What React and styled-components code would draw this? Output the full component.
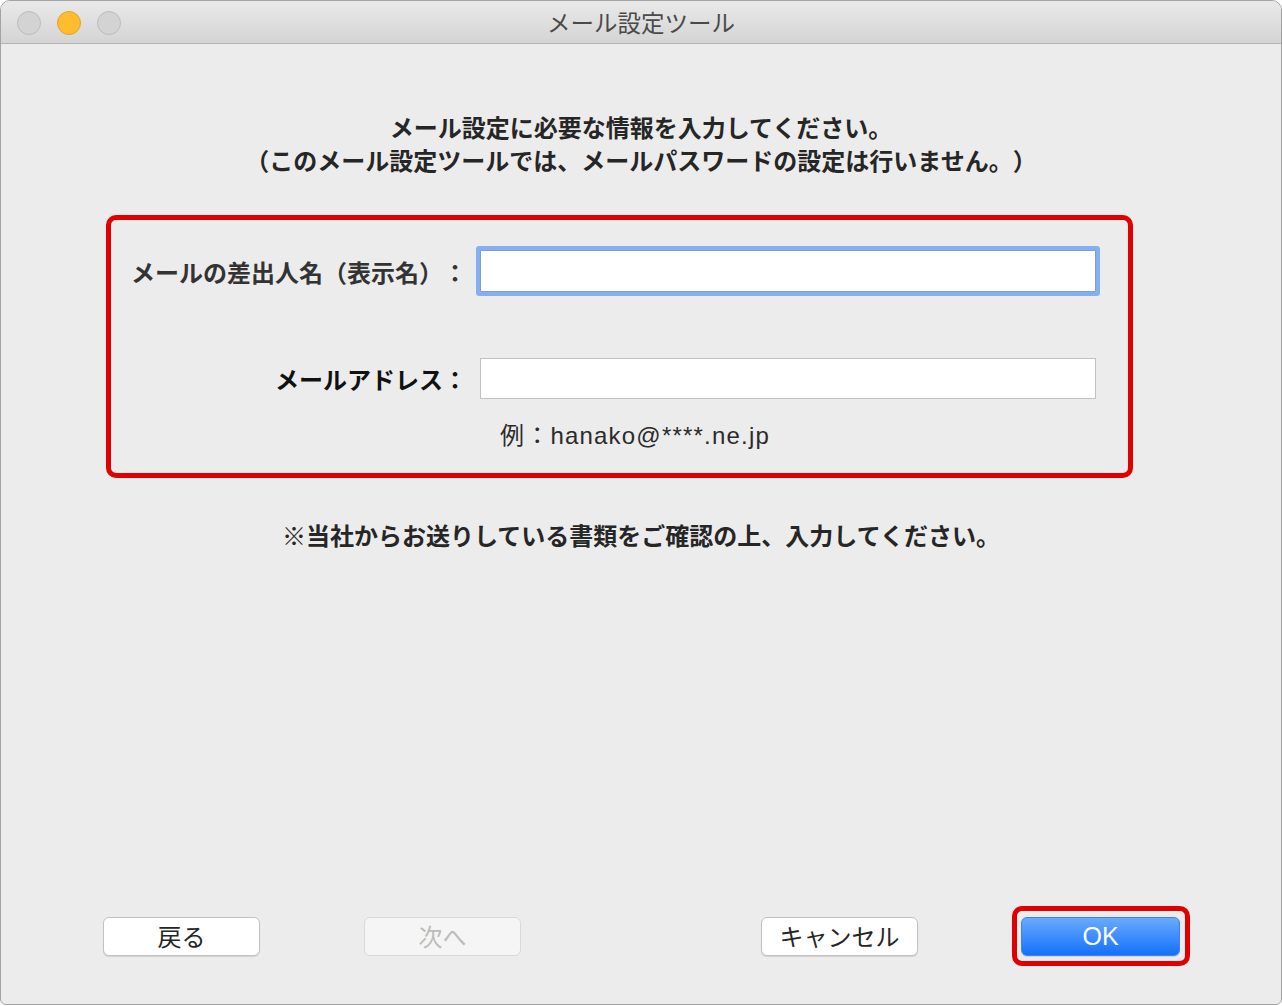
import React, { useState } from 'react';
import styled, { createGlobalStyle } from 'styled-components';

const GlobalStyle = createGlobalStyle`
  html, body {
    margin: 0;
    padding: 0;
    background: #ffffff;
  }
  body {
    font-family: "Liberation Sans", "Noto Sans CJK JP", sans-serif;
    text-spacing-trim: space-all;
  }
  * { box-sizing: border-box; }
`;

const Window = styled.div`
  width: 1282px;
  height: 1005px;
  display: flex;
  flex-direction: column;
  border: 1px solid #a3a3a3;
  border-radius: 10px 10px 6px 6px;
  background: #ececec;
  overflow: hidden;
`;

const TitleBar = styled.div`
  position: relative;
  height: 43px;
  flex: none;
  display: flex;
  align-items: center;
  justify-content: center;
  background: linear-gradient(#e9e9e9, #d4d4d4);
  border-bottom: 1px solid #b3b3b3;
`;

const Lights = styled.div`
  position: absolute;
  left: 16px;
  top: 10px;
  display: flex;
  gap: 16px;
`;

const Light = styled.span`
  width: 24px;
  height: 24px;
  border-radius: 50%;
  background: ${p => (p.$on ? '#febc2e' : '#d3d3d3')};
  border: 1px solid ${p => (p.$on ? '#e1a325' : '#bcbcbc')};
`;

const Title = styled.div`
  font-family: "Noto Sans CJK JP", sans-serif;
  font-size: 23.5px;
  color: #4a4a4a;
`;

const Body = styled.div`
  flex: 1;
  display: flex;
  flex-direction: column;
  padding: 66px 0 38px;
`;

const Lead = styled.p`
  margin: 0;
  text-align: center;
  font-family: "Noto Sans CJK JP", sans-serif;
  font-weight: 700;
  font-size: 24px;
  line-height: 33px;
  color: #262626;
`;

const FormBox = styled.div`
  margin: 39px 0 0 105px;
  width: 1027px;
  border: 5px solid #e00000;
  border-radius: 10px;
  padding: 30px 0 24px 0;
`;

const Field = styled.div`
  display: flex;
  align-items: center;
  gap: 13px;
  margin-bottom: ${p => p.$gap || 0}px;
`;

const Label = styled.label`
  width: 356px;
  flex: none;
  text-align: right;
  font-family: "Noto Sans CJK JP", sans-serif;
  font-weight: 700;
  font-size: 24px;
  color: ${p => p.$color || '#333'};
  white-space: nowrap;
`;

const Input = styled.input`
  width: 616px;
  height: ${p => (p.$focus ? '42px' : '41px')};
  border: 1px solid ${p => (p.$focus ? '#7c9ed8' : '#c0c0c0')};
  background: #fff;
  outline: none;
  box-shadow: ${p => (p.$focus ? '0 0 0 4px #86aef2' : 'none')};
  border-radius: ${p => (p.$focus ? '1px' : '0')};
  font-size: 20px;
  padding: 0 8px;
`;

const Hint = styled.div`
  margin: 24px 0 0 389px;
  font-size: 24px;
  line-height: 26px;
  letter-spacing: 1.2px;
  color: #2b2b2b;
`;

const Note = styled(Lead)`
  margin-top: 40px;
`;

const Spacer = styled.div`
  flex: 1;
`;

const ButtonRow = styled.div`
  display: flex;
  align-items: center;
  justify-content: space-between;
  padding: 0 91px 0 102px;
`;

const Group = styled.div`
  display: flex;
  align-items: center;
  gap: ${p => p.$gap}px;
`;

const Button = styled.button`
  width: 157px;
  height: 39px;
  border-radius: 6px;
  font-family: "Noto Sans CJK JP", "Liberation Sans", sans-serif;
  font-size: 24px;
  line-height: 1;
  padding: 0;
  border: 1px solid ${p => (p.$disabled ? '#d9d9d9' : '#c2c2c2')};
  background: ${p => (p.$disabled ? '#f5f5f5' : '#ffffff')};
  color: ${p => (p.$disabled ? '#bcbcbc' : '#262626')};
  box-shadow: ${p => (p.$disabled ? 'none' : '0 1px 1px rgba(0,0,0,0.12)')};
`;

const PrimaryButton = styled(Button)`
  width: 159px;
  border: 1px solid #3b84f0;
  background: linear-gradient(#6aaafd, #1471fb);
  color: #ffffff;
  font-family: "Liberation Sans", sans-serif;
  font-size: 25px;
`;

const Highlight = styled.div`
  border: 5px solid #e00000;
  border-radius: 10px;
  padding: 6px 5px 5px 4px;
`;

export default function App() {
  const [name, setName] = useState('');
  const [mail, setMail] = useState('');

  return (
    <>
      <GlobalStyle />
      <Window>
        <TitleBar>
          <Lights>
            <Light />
            <Light $on />
            <Light />
          </Lights>
          <Title>メール設定ツール</Title>
        </TitleBar>
        <Body>
          <Lead>
            メール設定に必要な情報を入力してください。
            <br />
            （このメール設定ツールでは、メールパスワードの設定は行いません。）
          </Lead>
          <FormBox>
            <Field $gap={66}>
              <Label>メールの差出人名（表示名）：</Label>
              <Input $focus value={name} onChange={e => setName(e.target.value)} />
            </Field>
            <Field>
              <Label $color="#111">メールアドレス：</Label>
              <Input value={mail} onChange={e => setMail(e.target.value)} />
            </Field>
            <Hint>例：hanako@****.ne.jp</Hint>
          </FormBox>
          <Note>※当社からお送りしている書類をご確認の上、入力してください。</Note>
          <Spacer />
          <ButtonRow>
            <Group $gap={104}>
              <Button>戻る</Button>
              <Button $disabled>次へ</Button>
            </Group>
            <Group $gap={94}>
              <Button>キャンセル</Button>
              <Highlight>
                <PrimaryButton>OK</PrimaryButton>
              </Highlight>
            </Group>
          </ButtonRow>
        </Body>
      </Window>
    </>
  );
}
